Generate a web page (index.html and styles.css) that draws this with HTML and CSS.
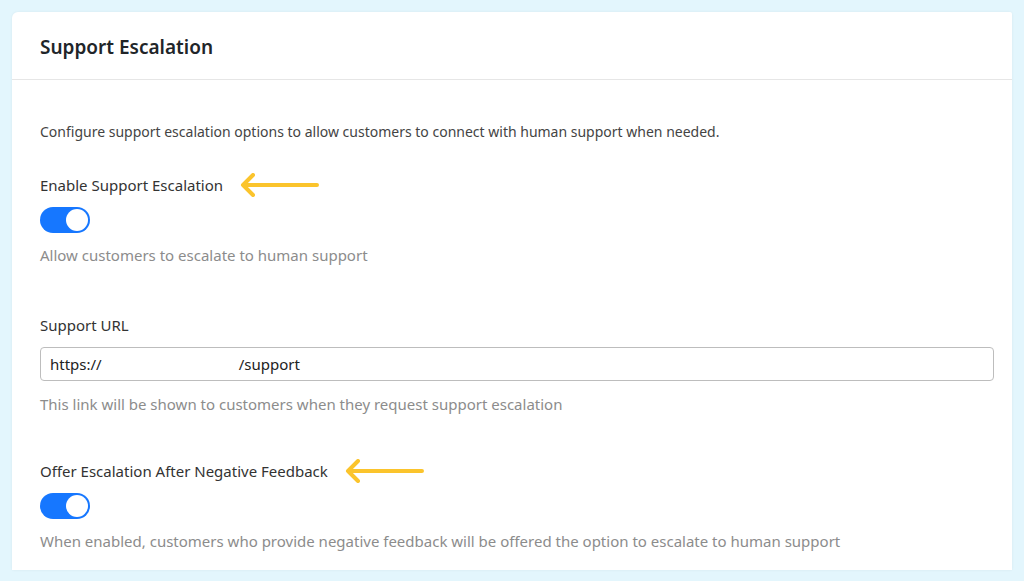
FILE: index.html
```html
<!DOCTYPE html>
<html>
<head>
<meta charset="utf-8">
<link rel="stylesheet" href="styles.css">
</head>
<body>
<div class="card">
  <div class="card-header">
    <h2 class="title">Support Escalation</h2>
  </div>
  <div class="card-body">
    <p class="intro">Configure support escalation options to allow customers to connect with human support when needed.</p>

    <div class="field field-first">
      <div class="label-row">
        <span class="label">Enable Support Escalation</span>
        <svg class="arrow" width="80" height="24" viewBox="0 0 80 24"><path d="M78 12H4M14 2L4 12L14 22" fill="none" stroke="#fbc42c" stroke-width="4" stroke-linecap="round" stroke-linejoin="round"/></svg>
      </div>
      <div class="switch"><span class="knob"></span></div>
      <p class="help">Allow customers to escalate to human support</p>
    </div>

    <div class="field field-url">
      <div class="label-row"><span class="label">Support URL</span></div>
      <div class="input"><span>https://</span><span class="gap"></span><span>/support</span></div>
      <p class="help help-url">This link will be shown to customers when they request support escalation</p>
    </div>

    <div class="field field-neg">
      <div class="label-row">
        <span class="label">Offer Escalation After Negative Feedback</span>
        <svg class="arrow" width="80" height="24" viewBox="0 0 80 24"><path d="M78 12H4M14 2L4 12L14 22" fill="none" stroke="#fbc42c" stroke-width="4" stroke-linecap="round" stroke-linejoin="round"/></svg>
      </div>
      <div class="switch"><span class="knob"></span></div>
      <p class="help">When enabled, customers who provide negative feedback will be offered the option to escalate to human support</p>
    </div>
  </div>
</div>
</body>
</html>
```

FILE: styles.css
```css
html, body {
  margin: 0;
  padding: 0;
}
body {
  background: #e3f6fd;
  font-family: "Noto Sans", "Open Sans", sans-serif;
  padding: 12px 12px 0 12px;
  height: 581px;
  box-sizing: border-box;
  overflow: hidden;
}
.card {
  background: #ffffff;
  width: 1000px;
  height: 558px;
  border-radius: 6px 2px 0 0;
  box-shadow: 0 0 3px rgba(0,0,0,0.06);
}
.card-header {
  height: 67px;
  border-bottom: 1px solid #e6e6e6;
  display: flex;
  align-items: center;
  padding: 0 28px;
}
.title {
  margin: 0;
  font-size: 19px;
  font-weight: 600;
  color: #212529;
  line-height: 24px;
  padding-top: 3px;
}
.card-body {
  padding: 42px 28px 0 28px;
}
.intro {
  margin: 0;
  font-size: 14px;
  line-height: 20px;
  color: #444;
}
.field {
  display: flex;
  flex-direction: column;
  align-items: flex-start;
}
.field-first { margin-top: 33px; }
.field-url { margin-top: 50px; }
.field-neg { margin-top: 47px; }
.label-row {
  display: flex;
  align-items: center;
  gap: 16px;
  height: 20px;
  margin-bottom: 12px;
}
.label {
  font-size: 15px;
  line-height: 20px;
  color: #333;
}
.arrow { display: block; }
.switch {
  width: 50px;
  height: 26px;
  border-radius: 13px;
  background: #1677ff;
  display: flex;
  align-items: center;
  justify-content: flex-end;
  padding: 0 2px;
  box-sizing: border-box;
}
.knob {
  width: 22px;
  height: 22px;
  border-radius: 50%;
  background: #fff;
}
.help {
  margin: 12px 0 0 0;
  font-size: 15px;
  line-height: 20px;
  color: #8c8c8c;
}
.input {
  width: 954px;
  height: 34px;
  box-sizing: border-box;
  border: 1px solid #bdbdbd;
  border-radius: 4px;
  display: flex;
  align-items: center;
  padding: 0 9px;
  font-size: 15px;
  color: #222;
}
.gap { width: 137px; }
.help-url { margin-top: 13px; }
```
